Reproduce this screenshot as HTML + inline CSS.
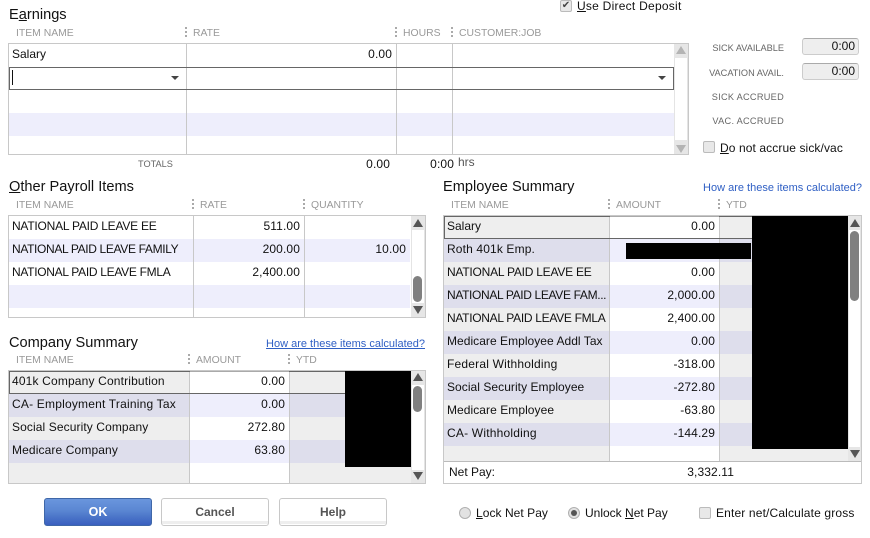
<!DOCTYPE html>
<html><head><meta charset="utf-8"><style>
html,body{margin:0;padding:0;background:#fff}
#p{position:relative;width:870px;height:538px;overflow:hidden;background:#fff;font-family:"Liberation Sans",Arial,sans-serif;font-size:12px;color:#111}
#p div,#p span.a{position:absolute}
.t{white-space:nowrap;line-height:14px}
.n{letter-spacing:.12px}
.h{white-space:nowrap;line-height:12px;font-size:10.4px;color:#999}
.s{white-space:nowrap;line-height:12px;font-size:9.2px;color:#666}
.ti{white-space:nowrap;font-size:14.6px;line-height:18px;color:#111}
.l{background:#c8c8c8}
.box{border:1px solid #c8c8c8;box-sizing:border-box;background:#fff}
.tri-u{width:0;height:0;border-left:5px solid transparent;border-right:5px solid transparent;border-bottom:8px solid #555}
.tri-d{width:0;height:0;border-left:5px solid transparent;border-right:5px solid transparent;border-top:8px solid #555}
.dot{width:1.5px;height:12px;background:repeating-linear-gradient(#aaa 0 2px,transparent 2px 4px)}
.cb{width:10px;height:10px;border:1px solid #bbb;border-radius:2px;background:#e8e8e8}
.rb{width:10px;height:10px;border:1px solid #b0b0b0;border-radius:50%;background:#e2e2e2}
.btn{box-sizing:border-box;width:108px;height:28px;border:1px solid #c8c8c8;border-radius:3px;background:linear-gradient(#fff 0 22px,#eee 22px 25px,#fff 25px);text-align:center;line-height:26px;font-weight:bold;font-size:12px;color:#555}
.thumb{background:#808080;border-radius:5px;width:9px}
u{text-decoration:underline}
</style></head><body><div id="p">

<div class="ti" style="left:9px;top:6px">E<u>a</u>rnings</div>
<div class="cb" style="left:560px;top:0px;text-align:center;line-height:10px;font-size:10px;color:#444">✔</div>
<div class="t" style="left:577px;top:-1px;letter-spacing:.25px"><u>U</u>se Direct Deposit</div>

<div class="h" style="left:16px;top:28px">ITEM NAME</div>
<div class="dot" style="left:185px;top:27px"></div>
<div class="h" style="left:193px;top:28px">RATE</div>
<div class="dot" style="left:395px;top:27px"></div>
<div class="h" style="left:403px;top:28px">HOURS</div>
<div class="dot" style="left:451px;top:27px"></div>
<div class="h" style="left:459px;top:28px">CUSTOMER:JOB</div>

<div class="box" style="left:8px;top:43px;width:681px;height:112px"></div>
<div style="left:9px;top:113px;width:665px;height:23px;background:#eeeefc"></div>
<div class="l" style="left:186px;top:44px;width:1px;height:110px"></div>
<div class="l" style="left:396px;top:44px;width:1px;height:110px"></div>
<div class="l" style="left:452px;top:44px;width:1px;height:110px"></div>
<div class="t" style="left:12px;top:47px">Salary</div>
<div class="t n" style="right:478px;top:47px">0.00</div>
<div style="left:9px;top:67px;width:665px;height:23px;box-sizing:border-box;border:1px solid #666"></div>
<div style="left:12px;top:70px;width:1px;height:15px;background:#111"></div>
<div style="left:171px;top:76px;width:0;height:0;border-left:4px solid transparent;border-right:4px solid transparent;border-top:4px solid #444"></div>
<div style="left:658px;top:76px;width:0;height:0;border-left:4px solid transparent;border-right:4px solid transparent;border-top:4px solid #444"></div>
<div style="left:674px;top:44px;width:14px;height:110px;background:#fff;border-left:1px solid #e4e4e4;border-right:1px solid #e4e4e4;box-sizing:border-box"></div>
<div style="left:674px;top:44px;width:14px;height:14px;background:#e6e6e6"></div>
<div style="left:674px;top:140px;width:14px;height:14px;background:#e6e6e6"></div>
<div class="tri-u" style="left:676px;top:46px;border-bottom-color:#b4b4b4"></div>
<div class="tri-d" style="left:676px;top:145px;border-top-color:#b4b4b4"></div>

<div class="s" style="left:138px;top:158px">TOTALS</div>
<div class="t n" style="right:480px;top:157px">0.00</div>
<div class="t n" style="right:416px;top:157px">0:00</div>
<div class="t" style="left:458px;top:155px;color:#555">hrs</div>

<div class="s" style="right:86px;top:42px">SICK AVAILABLE</div>
<div class="s" style="right:86px;top:67px">VACATION AVAIL.</div>
<div class="s" style="right:86px;top:91px;letter-spacing:.28px">SICK ACCRUED</div>
<div class="s" style="right:86px;top:115px;letter-spacing:.28px">VAC. ACCRUED</div>
<div class="t" style="left:802px;top:38px;width:57px;height:17px;box-sizing:border-box;background:#eee;border:1px solid #ccc;border-top-color:#aaa;border-radius:3px;text-align:right;padding-right:3px;line-height:15px">0:00</div>
<div class="t" style="left:802px;top:63px;width:57px;height:17px;box-sizing:border-box;background:#eee;border:1px solid #ccc;border-top-color:#aaa;border-radius:3px;text-align:right;padding-right:3px;line-height:15px">0:00</div>
<div class="cb" style="left:703px;top:141px"></div>
<div class="t" style="left:720px;top:141px;letter-spacing:.1px"><u>D</u>o not accrue sick/vac</div>

<div class="ti" style="left:9px;top:178px"><u>O</u>ther Payroll Items</div>
<div class="h" style="left:16px;top:200px">ITEM NAME</div>
<div class="dot" style="left:192px;top:199px"></div>
<div class="h" style="left:200px;top:200px">RATE</div>
<div class="dot" style="left:303px;top:199px"></div>
<div class="h" style="left:311px;top:200px">QUANTITY</div>

<div class="box" style="left:8px;top:215px;width:418px;height:103px"></div>
<div style="left:9px;top:239px;width:401px;height:23px;background:#eeeefc"></div>
<div style="left:9px;top:285px;width:401px;height:23px;background:#eeeefc"></div>
<div class="l" style="left:193px;top:216px;width:1px;height:101px"></div>
<div class="l" style="left:304px;top:216px;width:1px;height:101px"></div>
<div class="t" style="left:12px;top:219px;letter-spacing:-.23px">NATIONAL PAID LEAVE EE</div>
<div class="t n" style="right:570px;top:219px">511.00</div>
<div class="t" style="left:12px;top:242px;letter-spacing:-.35px">NATIONAL PAID LEAVE FAMILY</div>
<div class="t n" style="right:570px;top:242px">200.00</div>
<div class="t n" style="right:464px;top:242px">10.00</div>
<div class="t" style="left:12px;top:265px;letter-spacing:-.3px">NATIONAL PAID LEAVE FMLA</div>
<div class="t n" style="right:570px;top:265px">2,400.00</div>
<div style="left:411px;top:216px;width:14px;height:101px;background:#fff;border-left:1px solid #e4e4e4;border-right:1px solid #e4e4e4;box-sizing:border-box"></div>
<div style="left:411px;top:216px;width:14px;height:14px;background:#e6e6e6"></div>
<div style="left:411px;top:303px;width:14px;height:14px;background:#e6e6e6"></div>
<div class="tri-u" style="left:413px;top:219px"></div>
<div class="tri-d" style="left:413px;top:306px"></div>
<div class="thumb" style="left:413px;top:276px;height:26px"></div>

<div class="ti" style="left:9px;top:334px">Company Summary</div>
<div class="t" style="right:445px;top:337px;color:#2f5fc4;text-decoration:underline;font-size:11px">How are these items calculated?</div>
<div class="h" style="left:16px;top:355px">ITEM NAME</div>
<div class="dot" style="left:188px;top:354px"></div>
<div class="h" style="left:196px;top:355px">AMOUNT</div>
<div class="dot" style="left:288px;top:354px"></div>
<div class="h" style="left:296px;top:355px">YTD</div>

<div class="box" style="left:8px;top:370px;width:418px;height:114px"></div>
<div style="left:9px;top:371px;width:402px;height:23px;background:#eee"></div>
<div style="left:9px;top:394px;width:402px;height:23px;background:#dedeec"></div>
<div style="left:9px;top:417px;width:402px;height:23px;background:#eee"></div>
<div style="left:9px;top:440px;width:402px;height:23px;background:#dedeec"></div>
<div style="left:9px;top:463px;width:402px;height:20px;background:#eee"></div>
<div style="left:190px;top:371px;width:99px;height:23px;background:#fff"></div>
<div style="left:190px;top:394px;width:99px;height:23px;background:#eeeefc"></div>
<div style="left:190px;top:417px;width:99px;height:23px;background:#fff"></div>
<div style="left:190px;top:440px;width:99px;height:23px;background:#eeeefc"></div>
<div style="left:190px;top:463px;width:99px;height:20px;background:#fff"></div>
<div class="l" style="left:189px;top:371px;width:1px;height:112px"></div>
<div class="l" style="left:289px;top:371px;width:1px;height:112px"></div>
<div style="left:9px;top:371px;width:402px;height:23px;box-sizing:border-box;border:1px solid #666;border-width:1px 0 1px 1px"></div>
<div style="left:190px;top:372px;width:99px;height:21px;background:#fff"></div>
<div style="left:190px;top:371px;width:99px;height:1px;background:#aaa"></div>
<div class="t" style="left:12px;top:374px;letter-spacing:.16px">401k Company Contribution</div>
<div class="t n" style="right:585px;top:374px">0.00</div>
<div class="t" style="left:12px;top:397px;letter-spacing:.2px">CA- Employment Training Tax</div>
<div class="t n" style="right:585px;top:397px">0.00</div>
<div class="t" style="left:12px;top:420px;letter-spacing:.1px">Social Security Company</div>
<div class="t n" style="right:585px;top:420px">272.80</div>
<div class="t" style="left:12px;top:443px;letter-spacing:.12px">Medicare Company</div>
<div class="t n" style="right:585px;top:443px">63.80</div>
<div style="left:345px;top:371px;width:66px;height:96px;background:#000"></div>
<div style="left:411px;top:371px;width:14px;height:112px;background:#fff;border-left:1px solid #e4e4e4;border-right:1px solid #e4e4e4;box-sizing:border-box"></div>
<div style="left:411px;top:371px;width:14px;height:14px;background:#e6e6e6"></div>
<div style="left:411px;top:470px;width:14px;height:13px;background:#e6e6e6"></div>
<div class="tri-u" style="left:413px;top:373px"></div>
<div class="tri-d" style="left:413px;top:472px"></div>
<div class="thumb" style="left:413px;top:386px;height:26px"></div>

<div class="ti" style="left:443px;top:178px">Employee Summary</div>
<div class="t" style="right:8px;top:181px;color:#2f5fc4;font-size:11px">How are these items calculated?</div>
<div class="h" style="left:451px;top:200px">ITEM NAME</div>
<div class="dot" style="left:608px;top:199px"></div>
<div class="h" style="left:616px;top:200px">AMOUNT</div>
<div class="dot" style="left:718px;top:199px"></div>
<div class="h" style="left:726px;top:200px">YTD</div>

<div class="box" style="left:443px;top:215px;width:419px;height:269px"></div>
<div style="left:444px;top:216px;width:404px;height:23px;background:#eee"></div>
<div style="left:444px;top:239px;width:404px;height:23px;background:#dedeec"></div>
<div style="left:444px;top:262px;width:404px;height:23px;background:#eee"></div>
<div style="left:444px;top:285px;width:404px;height:23px;background:#dedeec"></div>
<div style="left:444px;top:308px;width:404px;height:23px;background:#eee"></div>
<div style="left:444px;top:331px;width:404px;height:23px;background:#dedeec"></div>
<div style="left:444px;top:354px;width:404px;height:23px;background:#eee"></div>
<div style="left:444px;top:377px;width:404px;height:23px;background:#dedeec"></div>
<div style="left:444px;top:400px;width:404px;height:23px;background:#eee"></div>
<div style="left:444px;top:423px;width:404px;height:23px;background:#dedeec"></div>
<div style="left:444px;top:446px;width:404px;height:15px;background:#eee"></div>
<div style="left:610px;top:216px;width:109px;height:23px;background:#fff"></div>
<div style="left:610px;top:239px;width:109px;height:23px;background:#eeeefc"></div>
<div style="left:610px;top:262px;width:109px;height:23px;background:#fff"></div>
<div style="left:610px;top:285px;width:109px;height:23px;background:#eeeefc"></div>
<div style="left:610px;top:308px;width:109px;height:23px;background:#fff"></div>
<div style="left:610px;top:331px;width:109px;height:23px;background:#eeeefc"></div>
<div style="left:610px;top:354px;width:109px;height:23px;background:#fff"></div>
<div style="left:610px;top:377px;width:109px;height:23px;background:#eeeefc"></div>
<div style="left:610px;top:400px;width:109px;height:23px;background:#fff"></div>
<div style="left:610px;top:423px;width:109px;height:23px;background:#eeeefc"></div>
<div style="left:610px;top:446px;width:109px;height:15px;background:#fff"></div>
<div class="l" style="left:609px;top:216px;width:1px;height:245px"></div>
<div class="l" style="left:719px;top:216px;width:1px;height:245px"></div>
<div style="left:444px;top:216px;width:308px;height:23px;box-sizing:border-box;border:1px solid #666;border-width:1px 0 1px 1px"></div>
<div style="left:610px;top:217px;width:109px;height:21px;background:#fff"></div>
<div style="left:610px;top:216px;width:109px;height:1px;background:#aaa"></div>
<div class="t" style="left:447px;top:219px">Salary</div>
<div class="t n" style="right:155px;top:219px">0.00</div>
<div class="t" style="left:447px;top:242px;letter-spacing:.14px">Roth 401k Emp.</div>
<div class="t" style="left:447px;top:265px;letter-spacing:-.23px">NATIONAL PAID LEAVE EE</div>
<div class="t n" style="right:155px;top:265px">0.00</div>
<div class="t" style="left:447px;top:288px;letter-spacing:-.35px">NATIONAL PAID LEAVE FAM...</div>
<div class="t n" style="right:155px;top:288px">2,000.00</div>
<div class="t" style="left:447px;top:311px;letter-spacing:-.3px">NATIONAL PAID LEAVE FMLA</div>
<div class="t n" style="right:155px;top:311px">2,400.00</div>
<div class="t" style="left:447px;top:334px;letter-spacing:.04px">Medicare Employee Addl Tax</div>
<div class="t n" style="right:155px;top:334px">0.00</div>
<div class="t" style="left:447px;top:357px;letter-spacing:.2px">Federal Withholding</div>
<div class="t n" style="right:155px;top:357px">-318.00</div>
<div class="t" style="left:447px;top:380px;letter-spacing:.05px">Social Security Employee</div>
<div class="t n" style="right:155px;top:380px">-272.80</div>
<div class="t" style="left:447px;top:403px;letter-spacing:.06px">Medicare Employee</div>
<div class="t n" style="right:155px;top:403px">-63.80</div>
<div class="t" style="left:447px;top:426px;letter-spacing:.2px">CA- Withholding</div>
<div class="t n" style="right:155px;top:426px">-144.29</div>
<div style="left:626px;top:243px;width:125px;height:16px;background:#000"></div>
<div style="left:752px;top:216px;width:96px;height:233px;background:#000"></div>
<div style="left:848px;top:216px;width:13px;height:245px;background:#fff;border-left:1px solid #e4e4e4;border-right:1px solid #e4e4e4;box-sizing:border-box"></div>
<div style="left:848px;top:216px;width:13px;height:14px;background:#e6e6e6"></div>
<div style="left:848px;top:447px;width:13px;height:14px;background:#e6e6e6"></div>
<div class="tri-u" style="left:850px;top:219px"></div>
<div class="tri-d" style="left:850px;top:450px"></div>
<div class="thumb" style="left:850px;top:231px;height:70px"></div>
<div style="left:444px;top:461px;width:417px;height:1px;background:#bbb"></div>
<div class="t" style="left:449px;top:465px">Net Pay:</div>
<div class="t n" style="right:136px;top:465px">3,332.11</div>

<div class="btn" style="left:44px;top:498px;border-color:#3f67a8;background:linear-gradient(#6a96dd,#5a86d2 45%,#4a74c8 70%,#3a5fc0);color:#fff;font-size:12.5px">OK</div>
<div class="btn" style="left:161px;top:498px">Cancel</div>
<div class="btn" style="left:279px;top:498px">Help</div>

<div class="rb" style="left:459px;top:507px"></div>
<div class="t" style="left:476px;top:506px;letter-spacing:.05px"><u>L</u>ock Net Pay</div>
<div class="rb" style="left:568px;top:507px"></div>
<div style="left:571px;top:510px;width:6px;height:6px;border-radius:50%;background:#555"></div>
<div class="t" style="left:585px;top:506px;letter-spacing:0"><u style="text-decoration:none">Unlock</u> <u>N</u>et Pay</div>
<div class="cb" style="left:699px;top:507px"></div>
<div class="t" style="left:716px;top:506px;letter-spacing:.15px">Enter net/Calculate <u>g</u>ross</div>

</div></body></html>
